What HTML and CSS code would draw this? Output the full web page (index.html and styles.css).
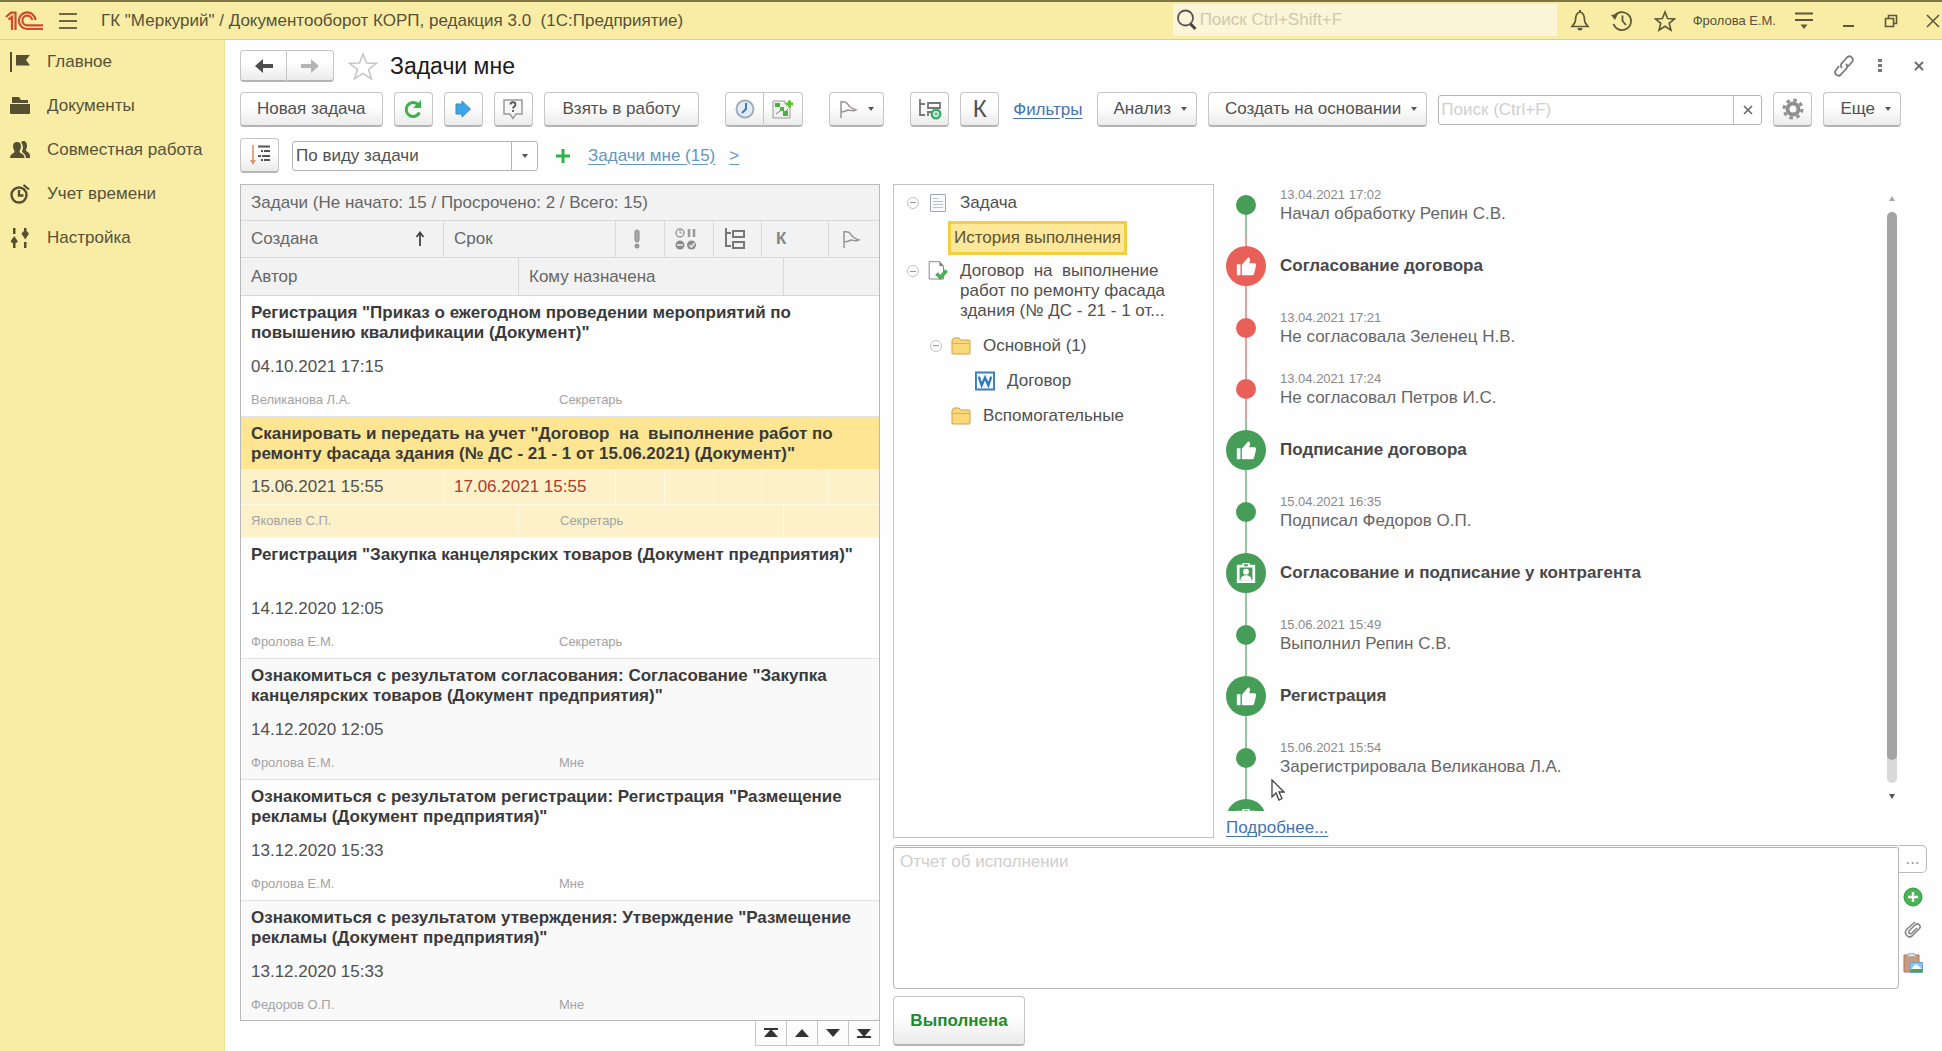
FILE: index.html
```html
<!DOCTYPE html>
<html lang="ru">
<head>
<meta charset="utf-8">
<title>Задачи мне</title>
<link rel="stylesheet" href="styles.css">
</head>
<body>
<svg class="symbols" width="0" height="0" aria-hidden="true">
  <symbol id="thumb" viewBox="0 0 24 24"><path fill="#fff" d="M2 10h4v12H2zM7.500 21V10.500L14.500 2.500l1.700 1.700c.3.3.4.8.3 1.200L15.500 9H21a2 2 0 0 1 2 2.400l-2.200 9A2 2 0 0 1 18.800 22H8.500a1 1 0 0 1-1-1z"/></symbol>
  <symbol id="badge" viewBox="0 0 24 24"><path fill="#fff" fill-rule="evenodd" d="M2 3h6V1h8v2h6v20H2zM5 6v14h14V6zM10 2.500v2h4v-2z"/><circle cx="12" cy="10.500" r="3.200" fill="#fff"/><path fill="#fff" d="M6 20c0-4 3-5.500 6-5.500s6 1.500 6 5.500z"/></symbol>
  <symbol id="folder" viewBox="0 0 20 18"><path d="M1 5V3l2-2h5l2 2h8a1 1 0 0 1 1 1v12a1 1 0 0 1-1 1H2a1 1 0 0 1-1-1z" fill="#fbd978" stroke="#c9a24e"/><path d="M1.500 6.500h17" stroke="#d9b258"/></symbol>
  <symbol id="flag" viewBox="0 0 20 20"><path d="M3 2v17M3 3c5-1 6 1 8 4 2 2 4 3 7 4-3 2-6 0-8 0-2 1-4 2-7 2" fill="none" stroke="#9b9494" stroke-width="1.500"/></symbol>
  <symbol id="subtasks" viewBox="0 0 24 24"><path d="M3 1v18h5M3 6h5M10 4h11v6H10zM10 15h11v6H10z" fill="none" stroke="#777" stroke-width="2"/></symbol>
</svg>

<header class="topbar">
  <svg class="logo" viewBox="0 0 38 20"><g fill="none" stroke="#cf4a2c" stroke-width="2.200"><path d="M1 6l5-4.300h4.500V19M3.500 8.500L7 6v13"/><path d="M30.500 9A8.300 8.300 0 1 0 22 18H38M27 9a4.800 4.800 0 1 0-5 5.300H38"/></g></svg>
  <button class="plain burger" aria-label="Меню"><svg width="20" height="18"><path d="M1 2h18M1 9h18M1 16h18" stroke="#6f683f" stroke-width="2"/></svg></button>
  <div class="app-title">ГК "Меркурий" / Документооборот КОРП, редакция 3.0 &nbsp;(1С:Предприятие)</div>
  <div class="global-search">
    <svg width="22" height="22" viewBox="0 0 22 22"><circle cx="9.500" cy="9" r="7.500" fill="none" stroke="#555" stroke-width="1.800"/><path d="M14.500 15l5 5" stroke="#444" stroke-width="3"/></svg>
    <input type="search" placeholder="Поиск Ctrl+Shift+F" aria-label="Глобальный поиск">
  </div>
  <div class="top-icons">
    <button class="plain" aria-label="Уведомления"><svg width="20" height="22" viewBox="0 0 20 22"><path d="M10 2c-4 1-4.500 4-4.500 8 0 3-1.500 4-3.500 6.500h16c-2-2.500-3.500-3.500-3.500-6.500 0-4-.5-7-4.500-8z" fill="none" stroke="#5d5838" stroke-width="1.700"/><path d="M7.500 18h5a2.500 2.500 0 0 1-5 0zM9 0h2v3H9z" fill="#5d5838"/></svg></button>
    <button class="plain" aria-label="История"><svg width="22" height="22" viewBox="0 0 22 22"><path d="M3 7a9 9 0 1 1-.5 7M11.500 5.500V11l3.500 4" fill="none" stroke="#5d5838" stroke-width="1.800"/><path d="M0 5l7-1-3 6z" fill="#5d5838"/></svg></button>
    <button class="plain" aria-label="Избранное"><svg width="22" height="22" viewBox="0 0 22 22"><path d="M11 2l2.600 6.500 7 .4-5.400 4.400 1.800 6.900-6-3.900-6 3.900 1.800-6.900L1.400 8.900l7-.4z" fill="none" stroke="#5d5838" stroke-width="1.600"/></svg></button>
  </div>
  <a class="user" href="#">Фролова Е.М.</a>
  <div class="window-icons">
    <button class="plain" aria-label="Настройки окна"><svg width="20" height="20" viewBox="0 0 20 20"><path d="M1 2.500h18M1 9h18" stroke="#5d5838" stroke-width="1.800"/><path d="M6.500 13.500h7L10 18z" fill="#5d5838"/></svg></button>
    <button class="plain" aria-label="Свернуть"><svg width="14" height="20"><path d="M1 15h11" stroke="#5d5838" stroke-width="2"/></svg></button>
    <button class="plain" aria-label="Восстановить"><svg width="14" height="14" viewBox="0 0 14 14"><path d="M1.500 4.500h8v8h-8zM4.500 4V1.500h8v8H10" fill="none" stroke="#5d5838" stroke-width="1.600"/></svg></button>
    <button class="plain" aria-label="Закрыть"><svg width="14" height="14" viewBox="0 0 14 14"><path d="M1 1l12 12M13 1L1 13" stroke="#5d5838" stroke-width="1.600"/></svg></button>
  </div>
</header>

<div class="workspace">
  <nav class="sidebar">
    <a href="#"><svg viewBox="0 0 20 20"><path d="M0 0h2v20H0zM6 3h14l-4 5 4 5.500H6z" fill="#565030"/></svg>Главное</a>
    <a href="#"><svg viewBox="0 0 20 20"><path d="M2 1h7l2 3h7v3H2zM0 8h20v9a1 1 0 0 1-1 1H1a1 1 0 0 1-1-1z" fill="#565030"/></svg>Документы</a>
    <a href="#"><svg viewBox="0 0 20 20"><path d="M13 1c3 0 4 2 4 5 0 2-1 3-1 4 0 2 4 2 4 6v2h-4c0-4-4-5-4-7 1-2 2-4-1-9zM7 2c3 0 4 2 4 4.500S9.500 10 9.500 11.500c0 2 5 2 5 6.500H0c0-4.500 4.500-4.500 4.500-6.500C4.500 10 3 9 3 6.500S4 2 7 2z" fill="#565030"/></svg>Совместная работа</a>
    <a href="#"><svg viewBox="0 0 20 20"><circle cx="9" cy="11" r="7.500" fill="none" stroke="#565030" stroke-width="2.400"/><path d="M9 6v5.500h4.500" fill="none" stroke="#565030" stroke-width="2.400"/><path d="M14 0l6 5-2 1-5-4z" fill="#565030"/></svg>Учет времени</a>
    <a href="#"><svg viewBox="0 0 20 20"><path d="M3 0h2.500v6H3zM4.200 8L8 13.500l-2.500 2V20H3v-4.500l-2.500-2zM14 0h2.500v3L19 5.500l-3.800 6-3.800-6L14 3zM14 14h2.500v6H14z" fill="#565030"/></svg>Настройка</a>
  </nav>

  <main class="main">
    <div class="form-head">
      <div class="btn-group">
        <button class="btn nav" aria-label="Назад"><svg width="18" height="14" viewBox="0 0 18 14"><path d="M8 0v5h10v4H8v5L0 7z" fill="#4d4d4d"/></svg></button>
        <button class="btn nav" aria-label="Вперед"><svg width="18" height="14" viewBox="0 0 18 14"><path d="M10 0v5H0v4h10v5l8-7z" fill="#b5b5b5"/></svg></button>
      </div>
      <button class="plain fav" aria-label="В избранное"><svg width="30" height="28" viewBox="0 0 30 28"><path d="M15 2l3.500 9 10 .3-8 6.200 3 9.500-8.500-5.600L6.500 27l3-9.500-8-6.200 10-.3z" fill="#fff" stroke="#c4c4c4" stroke-width="1.500"/></svg></button>
      <h1>Задачи мне</h1>
      <div class="form-tools">
        <button class="plain" aria-label="Ссылка"><svg width="22" height="22" viewBox="0 0 22 22"><g fill="none" stroke="#7a7a7a" stroke-width="1.800"><path d="M9 13c-2-2-1-4 0-5l5-5.500c3-3 8 1 5 4.500l-4 4.500"/><path d="M13 9c2 2 1 4 0 5l-5 5.500c-3 3-8-1-5-4.500l3-4"/></g></svg></button>
        <button class="plain" aria-label="Ещё"><svg width="6" height="16"><path d="M1 1h4v3H1zM1 6h4v3H1zM1 11h4v3H1z" fill="#777"/></svg></button>
        <button class="plain close" aria-label="Закрыть форму"><svg width="10" height="10"><path d="M1 1l8 8M9 1L1 9" stroke="#6a6a6a" stroke-width="1.800"/></svg></button>
      </div>
    </div>

    <div class="toolbar">
      <button class="btn">Новая задача</button>
      <button class="btn icon" aria-label="Обновить"><svg width="20" height="20" viewBox="0 0 20 20"><path d="M15 5.500a7 7 0 1 0 1.500 8" fill="none" stroke="#3fb04c" stroke-width="3"/><path d="M18 1v8h-8z" fill="#3fb04c"/></svg></button>
      <button class="btn icon" aria-label="Перенаправить"><svg width="18" height="18" viewBox="0 0 18 18"><path d="M2 4h6V1l8.500 8L8 17v-3H2z" fill="#3ea6e8" stroke="#3489c4"/></svg></button>
      <button class="btn icon" aria-label="Вопрос"><svg width="22" height="22" viewBox="0 0 22 22"><path d="M2 2h18v14h-6l-3 4.500L8 16H2z" fill="#f6f6f6" stroke="#9a9a9a" stroke-width="1.500"/><path d="M8.500 6.500c0-3 5-3 5 0 0 2-2.500 2-2.500 4M11 12v2" fill="none" stroke="#555" stroke-width="1.800"/></svg></button>
      <button class="btn wide">Взять в работу</button>
      <div class="btn-group apart">
        <button class="btn icon" aria-label="Срок"><svg width="20" height="20" viewBox="0 0 20 20"><circle cx="10" cy="10" r="8.500" fill="#e3edf7" stroke="#a3adb8" stroke-width="2"/><path d="M11 4v6l-4 4" fill="none" stroke="#3d79b8" stroke-width="2"/></svg></button>
        <button class="btn icon" aria-label="Добавить процесс"><svg width="22" height="20" viewBox="0 0 22 20"><path d="M1 2h12v3h5v14H1z" fill="#eef3ee" stroke="#999"/><path d="M3 4h5v4H3zM8 8h4v4H8zM11 12h5v5h-5z" fill="#4fae45"/><path d="M4 15l4-3M14 12l2-2" stroke="#777"/><path d="M14 5h7M17.500 1.500v7" stroke="#5dc52c" stroke-width="3"/></svg></button>
      </div>
      <button class="btn drop flag-btn apart" aria-label="Флаг"><svg width="20" height="20"><use href="#flag"/></svg><span class="caret"></span></button>
      <button class="btn icon apart" aria-label="Подзадача"><svg width="24" height="24" viewBox="0 0 24 24"><path d="M2 2v16h5M2 7h5M10 6h12v5H10zM10 19v-4h4" fill="none" stroke="#777" stroke-width="1.800"/><circle cx="18" cy="17" r="4.200" fill="#fff" stroke="#3cae6b" stroke-width="2.600"/><path d="M16 17h4M18 15v4" stroke="#3cae6b"/></svg></button>
      <button class="btn icon letter">К</button>
      <a class="link filters" href="#">Фильтры</a>
      <button class="btn drop">Анализ<span class="caret"></span></button>
      <button class="btn drop">Создать на основании<span class="caret"></span></button>
      <div class="field search-field">
        <input type="text" placeholder="Поиск (Ctrl+F)" aria-label="Поиск">
        <button class="field-btn" aria-label="Очистить"><svg width="10" height="10"><path d="M1 1l8 8M9 1L1 9" stroke="#666" stroke-width="1.600"/></svg></button>
      </div>
      <button class="btn icon" aria-label="Настройка списка"><svg width="22" height="22" viewBox="0 0 22 22"><circle cx="11" cy="11" r="9" fill="none" stroke="#8f8f8f" stroke-width="3" stroke-dasharray="3.500 3.570"/><circle cx="11" cy="11" r="5.500" fill="none" stroke="#8f8f8f" stroke-width="4"/></svg></button>
      <button class="btn drop">Еще<span class="caret"></span></button>
    </div>

    <div class="filterbar">
      <button class="btn icon" aria-label="Сортировка"><svg width="22" height="22" viewBox="0 0 22 22"><path d="M4 1v18" stroke="#dd9468" stroke-width="1.600"/><path d="M1 16h6l-3 5z" fill="#dd9468"/><path d="M9 2.500h12M12 7h2M15 7h6M9 12h3M13 12h8M12 16h2M15 16h6" stroke="#555" stroke-width="1.800"/></svg></button>
      <div class="field select-field">
        <select aria-label="Группировка"><option>По виду задачи</option></select>
        <span class="select-arrow"><span class="caret"></span></span>
      </div>
      <button class="plain" aria-label="Добавить"><svg width="14" height="14"><path d="M0 7h14M7 0v14" stroke="#2fb544" stroke-width="3"/></svg></button>
      <a class="link soft" href="#">Задачи мне (15)</a>
      <a class="link soft next" href="#">&gt;</a>
    </div>

    <div class="content">
      <section class="tasks">
        <div class="table-box">
        <table>
          <colgroup><col class="c1"><col class="c2"><col class="c3"><col class="c4"><col class="c4"><col class="c5"><col class="c6"><col class="c7"><col></colgroup>
          <thead>
            <tr class="h1"><th colspan="9">Задачи (Не начато: 15 / Просрочено: 2 / Всего: 15)</th></tr>
            <tr class="h2">
              <th><span class="sorted">Создана <svg width="10" height="16" viewBox="0 0 10 16"><path d="M5 15V2M1.500 6L5 1.500 8.500 6" fill="none" stroke="#444" stroke-width="1.800"/></svg></span></th>
              <th colspan="2">Срок</th>
              <th class="ic"><svg width="8" height="20" viewBox="0 0 8 20"><rect x="2" y="1" width="4" height="12" rx="2" fill="#aaa" stroke="#888"/><circle cx="4" cy="17" r="2.500" fill="#999"/></svg></th>
              <th class="ic"><svg width="22" height="22" viewBox="0 0 22 22"><circle cx="5" cy="5" r="4" fill="none" stroke="#999" stroke-width="1.500"/><path d="M5 2v3h2" fill="none" stroke="#999"/><path d="M14 1v8M19 1v8" stroke="#999" stroke-width="2.500"/><circle cx="5" cy="17" r="4.500" fill="#8c8c8c"/><path d="M2 17h6" stroke="#eee" stroke-width="1.500"/><circle cx="16.500" cy="17" r="4.500" fill="#8c8c8c"/><path d="M14.500 17l2 2 3-4" fill="none" stroke="#eee" stroke-width="1.500"/></svg></th>
              <th class="ic"><svg width="24" height="24"><use href="#subtasks"/></svg></th>
              <th class="k" colspan="2">К</th>
              <th class="ic"><svg width="20" height="20"><use href="#flag"/></svg></th>
            </tr>
            <tr class="h3"><th colspan="2">Автор</th><th colspan="5">Кому назначена</th><th colspan="2"></th></tr>
          </thead>
          <tbody>
            <tr class="name"><td colspan="9">Регистрация "Приказ о ежегодном проведении мероприятий по повышению квалификации (Документ)"</td></tr>
            <tr class="date"><td>04.10.2021 17:15</td><td colspan="8"></td></tr>
            <tr class="who"><td colspan="2">Великанова Л.А.</td><td colspan="7">Секретарь</td></tr>
          </tbody>
          <tbody class="selected">
            <tr class="name"><td colspan="9">Сканировать и передать на учет "Договор&nbsp; на&nbsp; выполнение работ по ремонту фасада здания (№ ДС - 21 - 1 от 15.06.2021) (Документ)"</td></tr>
            <tr class="date"><td>15.06.2021 15:55</td><td class="overdue" colspan="2">17.06.2021 15:55</td><td></td><td></td><td></td><td colspan="2"></td><td></td></tr>
            <tr class="who"><td colspan="2">Яковлев С.П.</td><td colspan="5">Секретарь</td><td colspan="2"></td></tr>
          </tbody>
          <tbody>
            <tr class="name"><td colspan="9">Регистрация "Закупка канцелярских товаров (Документ предприятия)"</td></tr>
            <tr class="date"><td>14.12.2020 12:05</td><td colspan="8"></td></tr>
            <tr class="who"><td colspan="2">Фролова Е.М.</td><td colspan="7">Секретарь</td></tr>
          </tbody>
          <tbody class="even">
            <tr class="name"><td colspan="9">Ознакомиться с результатом согласования: Согласование "Закупка канцелярских товаров (Документ предприятия)"</td></tr>
            <tr class="date"><td>14.12.2020 12:05</td><td colspan="8"></td></tr>
            <tr class="who"><td colspan="2">Фролова Е.М.</td><td colspan="7">Мне</td></tr>
          </tbody>
          <tbody>
            <tr class="name"><td colspan="9">Ознакомиться с результатом регистрации: Регистрация "Размещение рекламы (Документ предприятия)"</td></tr>
            <tr class="date"><td>13.12.2020 15:33</td><td colspan="8"></td></tr>
            <tr class="who"><td colspan="2">Фролова Е.М.</td><td colspan="7">Мне</td></tr>
          </tbody>
          <tbody class="even">
            <tr class="name"><td colspan="9">Ознакомиться с результатом утверждения: Утверждение "Размещение рекламы (Документ предприятия)"</td></tr>
            <tr class="date"><td>13.12.2020 15:33</td><td colspan="8"></td></tr>
            <tr class="who"><td colspan="2">Федоров О.П.</td><td colspan="7">Мне</td></tr>
          </tbody>
        </table>
        </div>
        <div class="pager">
          <button aria-label="В начало"><svg width="14" height="10"><path d="M0 0h14v2H0zM7 1l7 8H0z" fill="#333"/></svg></button>
          <button aria-label="Вверх"><svg width="14" height="10"><path d="M7 1l7 8H0z" fill="#333"/></svg></button>
          <button aria-label="Вниз"><svg width="14" height="10"><path d="M0 1h14L7 9z" fill="#333"/></svg></button>
          <button aria-label="В конец"><svg width="14" height="10"><path d="M0 8h14v2H0zM0 1h14L7 9z" fill="#333"/></svg></button>
        </div>
      </section>

      <section class="details">
        <div class="panes">
          <ul class="tree">
            <li class="node"><span class="toggle"></span><svg class="node-icon" width="16" height="18" viewBox="0 0 16 18"><path d="M.5.5h15v17H.5z" fill="#f7f9fc" stroke="#9fa6b0"/><path d="M3 4.500h5M3 7.500h10M3 10.500h10M3 13.500h10" stroke="#b9c0ca"/></svg>Задача</li>
            <li class="node current"><a href="#">История выполнения</a></li>
            <li class="node long"><span class="toggle"></span><svg class="node-icon" width="19" height="20" viewBox="0 0 19 20"><path d="M.700.700h10.500L15 5v13H.700z" fill="#fff" stroke="#888"/><path d="M11 .7V5h4z" fill="#777"/><path d="M8 12.500l4 4 6-7" fill="none" stroke="#4cb050" stroke-width="3.600"/></svg><span>Договор&nbsp; на&nbsp; выполнение работ по ремонту фасада здания (№ ДС - 21 - 1 от...</span></li>
            <li class="node deep"><span class="toggle"></span><svg class="node-icon" width="20" height="18"><use href="#folder"/></svg>Основной (1)</li>
            <li class="node deepest"><svg class="node-icon" width="21" height="20" viewBox="0 0 21 20"><path d="M1 1h19v18H1z" fill="#f2f8fd" stroke="#3a7fb8" stroke-width="2"/><path d="M4 5.500L7 14.500 10.500 6.500 14 14.500 17 5.500" fill="none" stroke="#2f78b8" stroke-width="2.400"/></svg>Договор</li>
            <li class="node deep leaf"><svg class="node-icon" width="20" height="18"><use href="#folder"/></svg>Вспомогательные</li>
          </ul>
          <div class="history">
            <div class="history-view">
              <ol class="timeline">
                <li class="event ok first"><i class="dot"></i><div><time>13.04.2021 17:02</time><p>Начал обработку Репин С.В.</p></div></li>
                <li class="stage bad"><i class="disc"><svg width="22" height="22"><use href="#thumb"/></svg></i><h2>Согласование договора</h2></li>
                <li class="event bad"><i class="dot"></i><div><time>13.04.2021 17:21</time><p>Не согласовала Зеленец Н.В.</p></div></li>
                <li class="event bad"><i class="dot"></i><div><time>13.04.2021 17:24</time><p>Не согласовал Петров И.С.</p></div></li>
                <li class="stage ok"><i class="disc"><svg width="22" height="22"><use href="#thumb"/></svg></i><h2>Подписание договора</h2></li>
                <li class="event ok"><i class="dot"></i><div><time>15.04.2021 16:35</time><p>Подписал Федоров О.П.</p></div></li>
                <li class="stage ok"><i class="disc"><svg width="22" height="22"><use href="#badge"/></svg></i><h2>Согласование и подписание у контрагента</h2></li>
                <li class="event ok"><i class="dot"></i><div><time>15.06.2021 15:49</time><p>Выполнил Репин С.В.</p></div></li>
                <li class="stage ok"><i class="disc"><svg width="22" height="22"><use href="#thumb"/></svg></i><h2>Регистрация</h2></li>
                <li class="event ok"><i class="dot"></i><div><time>15.06.2021 15:54</time><p>Зарегистрировала Великанова Л.А.</p></div></li>
                <li class="stage ok"><i class="disc"><svg width="22" height="22"><use href="#badge"/></svg></i></li>
              </ol>
              <div class="scrollbar"><svg width="6" height="5"><path d="M3 0l3 5H0z" fill="#aaa"/></svg><div class="track"><div class="thumb"></div></div><svg width="6" height="5"><path d="M0 0h6L3 5z" fill="#555"/></svg></div>
            </div>
            <a class="link more" href="#">Подробнее...</a>
            <svg class="cursor" width="14" height="22" viewBox="0 0 14 22"><path d="M1 1v17l4-4 3 7 3-1.500-3-6.500h5z" fill="#fff" stroke="#444" stroke-width="1.300"/></svg>
          </div>
        </div>

        <div class="report">
          <textarea placeholder="Отчет об исполнении" aria-label="Отчет об исполнении"></textarea>
          <div class="report-tools">
            <button class="dots-btn" aria-label="Выбрать">...</button>
            <button class="plain" aria-label="Добавить файл"><svg width="20" height="20"><circle cx="10" cy="10" r="9" fill="#47b556" stroke="#329c43"/><path d="M5 10h10M10 5v10" stroke="#fff" stroke-width="2.400"/></svg></button>
            <button class="plain" aria-label="Прикрепить"><svg width="18" height="18" viewBox="0 0 18 18"><path d="M11 1L3 8c-4 4 1 10 5 7l7-7c3-3-1-7-4-4l-6 6c-1 2 1 4 3 2l5-5" fill="none" stroke="#858585" stroke-width="1.600"/></svg></button>
            <button class="plain" aria-label="Вставить изображение"><svg width="20" height="20" viewBox="0 0 20 20"><path d="M1 2h15v17H1z" fill="#c79c80" stroke="#a3765b"/><path d="M4 4V2l3-2h3l3 2v2z" fill="#ddd" stroke="#999"/><path d="M7 9.500h12.500V19.500H7z" fill="#8cc3f0" stroke="#6f9fc4"/><path d="M8 16l5-5 6 5z" fill="#f5fbff"/><path d="M7.500 16h12v3h-12z" fill="#4fa44c"/></svg></button>
          </div>
        </div>

        <div><button class="btn done">Выполнена</button></div>
      </section>
    </div>
  </main>
</div>
</body>
</html>
```

FILE: styles.css
```css
* { box-sizing: border-box; }

body {
  margin: 0;
  min-height: 100vh;
  display: flex;
  flex-direction: column;
  background: #fefefe;
  color: #505050;
  font-family: "Liberation Sans", Arial, sans-serif;
  font-size: 17px;
  line-height: 20px;
}

button, input, select, textarea { font: inherit; color: inherit; margin: 0; }
button { cursor: pointer; }
ul, ol { list-style: none; margin: 0; padding: 0; }
h1, h2, p { margin: 0; }
svg { display: block; flex: none; }
input, textarea, select { outline: none; }
.symbols { position: absolute; }

.plain {
  display: flex;
  align-items: center;
  justify-content: center;
  padding: 0;
  border: 0;
  background: none;
}

/* Top bar */
.topbar {
  display: flex;
  align-items: center;
  height: 40px;
  padding: 0 2px 0 5px;
  background: #f9eda6;
  border-top: 2px solid #7d7444;
  border-bottom: 1px solid #dccf8b;
  color: #57513a;
}
.logo { width: 38px; height: 20px; }
.burger { margin: 0 23px 0 15px; }
.app-title { flex: 1; white-space: nowrap; }
.global-search {
  display: flex;
  align-items: center;
  width: 384px;
  height: 32px;
  margin-bottom: 2px;
  padding-left: 3px;
  background: #fcf5d8;
}
.global-search input {
  flex: 1;
  min-width: 0;
  padding: 0 2px;
  border: 0;
  background: none;
}
.global-search input::placeholder { color: #cfc9ae; opacity: 1; }
.top-icons { display: flex; gap: 21px; margin: 0 17px 0 13px; }
.user { font-size: 13px; color: inherit; text-decoration: none; }
.window-icons { display: flex; align-items: center; gap: 28px; margin-left: 18px; }

/* Section list */
.workspace { flex: 1; display: flex; }
.sidebar {
  flex: none;
  width: 225px;
  background: #f9eda6;
  border-right: 1px solid #eadf9c;
}
.sidebar a {
  display: flex;
  align-items: center;
  gap: 17px;
  height: 44px;
  padding-left: 10px;
  color: #57513a;
  text-decoration: none;
}
.sidebar svg { width: 20px; height: 20px; }

/* Form */
.main {
  flex: 1;
  min-width: 0;
  display: flex;
  flex-direction: column;
  padding: 10px 15px 5px;
}
.form-head { display: flex; align-items: center; height: 32px; }
.form-head h1 { flex: 1; font-size: 23px; font-weight: 400; color: #1a1a1a; }
.fav { margin: 0 12px 0 14px; }
.form-tools { display: flex; align-items: center; gap: 22px; margin-right: 3px; }
.form-tools .close { margin-left: 9px; }

.btn {
  display: flex;
  align-items: center;
  justify-content: center;
  height: 35px;
  padding: 0 16px;
  border: 1px solid #c6c6c6;
  border-bottom: 2px solid #b4b4b4;
  border-radius: 4px;
  background: linear-gradient(#fff 40%, #ebebeb);
  white-space: nowrap;
}
.btn.icon { width: 39px; padding: 0; }
.btn.wide { padding: 0 18px; }
.btn.nav { width: 47px; height: 32px; padding: 0; }
.btn.drop { gap: 10px; padding: 0 9px 0 16px; }
.btn.flag-btn { padding-left: 8px; }
.btn.letter { font-size: 24px; }
.btn-group { display: flex; }
.btn-group .btn:first-child { border-radius: 4px 0 0 4px; }
.btn-group .btn:last-child { border-radius: 0 4px 4px 0; border-left: 0; }
.caret {
  border: 3px solid transparent;
  border-top: 4px solid #555;
  border-bottom: 0;
}

.toolbar { display: flex; align-items: center; gap: 11px; margin: 10px 26px 11px 0; }
.apart { margin-left: 15px; }
.link { color: #4674b0; text-decoration: underline; text-underline-offset: 3px; }
.link.soft { color: #6496c0; }
.filters { margin: 0 3px; }

.field {
  display: flex;
  height: 30px;
  border: 1px solid #b4b4b4;
  border-radius: 3px;
  background: #fff;
}
.field input { flex: 1; min-width: 0; padding: 0 2px; border: 0; background: none; }
.search-field { flex: 1; min-width: 120px; }
.search-field input::placeholder { color: #d0d0d0; opacity: 1; }
.field-btn {
  display: flex;
  align-items: center;
  justify-content: center;
  width: 28px;
  padding: 0;
  border: 0;
  border-left: 1px solid #c0c0c0;
  background: none;
}

.filterbar { display: flex; align-items: center; height: 35px; margin-bottom: 11px; gap: 18px; }
.select-field { width: 246px; margin-left: -5px; }
.select-field select { flex: 1; min-width: 0; padding: 0 3px; border: 0; background: none; appearance: none; }
.select-arrow {
  display: flex;
  align-items: center;
  justify-content: center;
  width: 26px;
  border-left: 1px solid #b4b4b4;
}
.next { margin-left: -4px; }

.content {
  flex: 1;
  display: grid;
  grid-template-columns: minmax(0, 640fr) minmax(0, 1034fr);
  gap: 13px;
}

/* Task table */
.table-box { border: 1px solid #b9b9b9; }
table { width: 100%; table-layout: fixed; border-collapse: separate; border-spacing: 0; }
.c1 { width: 202px; }
.c2 { width: 75px; }
.c3 { width: 97px; }
.c4 { width: 49px; }
.c5 { width: 48px; }
.c6 { width: 22px; }
.c7 { width: 45px; }
th, td { padding: 0 10px; text-align: left; }
th {
  background: #f2f2f2;
  border-bottom: 1px solid #d9d9d9;
  border-left: 1px solid #d9d9d9;
  font-weight: 400;
  color: #666;
}
th:first-child { border-left: 0; }
.h1 th { height: 36px; }
.h2 th { height: 37px; }
.h3 th { height: 38px; }
th.ic { padding: 0 6px 0 0; }
th.ic svg { margin: 0 auto; }
th.k { padding-left: 14px; font-weight: 700; color: #858585; }
.sorted { display: flex; align-items: center; justify-content: space-between; padding-right: 8px; }
.name td { height: 52px; padding-top: 7px; vertical-align: top; font-weight: 700; color: #3a3a3a; line-height: 20px; }
.date td { height: 36px; padding-top: 1px; }
.who td { height: 33px; border-bottom: 1px solid #e3e3e3; font-size: 13px; color: #a3a3a3; }
.who td:nth-child(2) { padding-left: 41px; }
tbody:last-child .who td { height: 31px; border-bottom: 0; }
.even td { background: #f9f9f9; }
.selected .name td { background: #fde591; }
.selected .date td, .selected .who td { background: #fdf1ca; border-left: 1px solid #fff8e3; }
.selected .date td { border-bottom: 1px solid #fff8e3; }
.selected .who td { border-bottom-color: #fff8e3; }
.selected td:first-child { border-left: 0; }
.date td.overdue { color: #b03a2c; }

.pager { display: flex; justify-content: flex-end; }
.pager button {
  display: flex;
  align-items: center;
  justify-content: center;
  width: 31px;
  height: 25px;
  padding: 0;
  border: 1px solid #c6c6c6;
  border-width: 0 1px 1px 0;
  background: #fcfcfc;
}
.pager button:first-child { width: 32px; border-left-width: 1px; }

/* Details */
.details { display: flex; flex-direction: column; gap: 7px; min-height: 0; }
.panes { flex: 1 1 0; min-height: 0; display: flex; }
.tree { flex: none; width: 321px; border: 1px solid #c2c2c2; }
.node { display: flex; align-items: center; height: 35px; padding-left: 13px; }
.node-icon { margin-right: 12px; }
.toggle {
  flex: none;
  width: 12px;
  height: 12px;
  margin-right: 9px;
  border: 1px solid #c4c4c4;
  border-radius: 50%;
  background: linear-gradient(#999, #999) center / 6px 1px no-repeat;
}
.node .node-icon { width: 20px; }
.node.current { padding-left: 54px; }
.node.current a {
  padding: 4px 3px;
  border: 3px solid #f3cf3d;
  background: #fde798;
  color: #5f5532;
  text-decoration: none;
}
.node.long { align-items: flex-start; height: 73px; padding: 6px 24px 0 13px; }
.node.long .toggle { margin-top: 4px; }
.node.deep { padding-left: 36px; }
.node.deepest { padding-left: 81px; }
.node.leaf { padding-left: 57px; }

.history { position: relative; flex: 1; min-width: 0; display: flex; flex-direction: column; padding-left: 12px; }
.history-view { flex: 1 1 0; min-height: 0; display: flex; overflow: hidden; }
.timeline { flex: 1; margin-top: -10px; }
.timeline li {
  display: grid;
  grid-template-columns: 40px 1fr;
  gap: 14px;
  align-items: center;
  height: 61px;
  background: linear-gradient(var(--line), var(--line)) 19px 0 / 2px 100% no-repeat;
}
.timeline li.stage { height: 62px; }
.ok { --tone: #459d58; --line: #93c5a0; }
.bad { --tone: #e96058; --line: #e3a09c; }
.timeline li.first { background-position: 19px 30px; }
.dot { width: 20px; height: 20px; margin: 0 auto; border-radius: 50%; background: var(--tone); }
.disc {
  display: flex;
  align-items: center;
  justify-content: center;
  width: 40px;
  height: 40px;
  border-radius: 50%;
  background: var(--tone);
}
.timeline time { display: block; font-size: 13px; color: #8a8a8a; line-height: 18px; }
.timeline p { color: #666; }
.timeline h2 { font-size: 17px; color: #484848; }

.scrollbar {
  display: flex;
  flex-direction: column;
  align-items: center;
  gap: 11px;
  width: 12px;
  margin: 12px 29px 12px 0;
}
.track { flex: 1; width: 10px; border-radius: 5px; background: #d9d9d9; }
.thumb { height: 96%; border-radius: 5px; background: #a3a3a3; }
.more { margin: 7px 0 1px; align-self: flex-start; line-height: 19px; }
.cursor { position: absolute; left: 57px; bottom: 37px; }

.report { display: flex; height: 144px; }
.report textarea {
  flex: 1;
  min-width: 0;
  padding: 4px 6px;
  border: 1px solid #b9b9b9;
  border-top: 3px double #b4b4b4;
  border-radius: 4px;
  background: #fefefe;
  resize: none;
}
.report textarea::placeholder { color: #d0cfcf; opacity: 1; }
.report-tools { display: flex; flex-direction: column; align-items: center; gap: 14px; width: 28px; }
.dots-btn {
  width: 28px;
  height: 28px;
  padding: 0;
  border: 1px solid #b9b9b9;
  border-left: 0;
  border-radius: 0 5px 5px 0;
  background: #fefefe;
  color: #999;
}
.btn.done { height: 50px; width: 132px; font-weight: 700; color: #1f8a26; }
```
